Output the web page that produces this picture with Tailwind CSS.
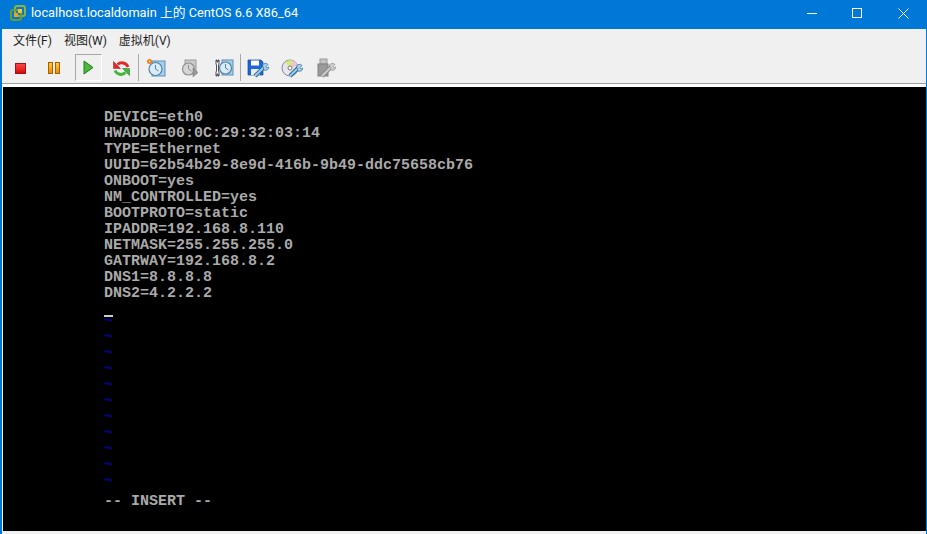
<!DOCTYPE html>
<html lang="zh-CN">
<head>
<meta charset="UTF-8">
<title>localhost.localdomain 上的 CentOS 6.6 X86_64</title>
<script src="https://cdn.jsdelivr.net/npm/@tailwindcss/browser@4"></script>
</head>
<body class="w-[927px] h-[534px] overflow-hidden bg-white font-['Roboto','Noto_Sans_CJK_SC',sans-serif]">
<div class="h-[534px] flex flex-col border-l-2 border-r border-[#0078d7] bg-[#f0f0f0]">
  <!-- title bar -->
  <div class="h-[29px] -ml-[2px] -mr-px pb-[3px] pr-px bg-[#0078d7] flex items-center text-white shrink-0">
    <svg class="ml-[10px] w-[16px] h-[16px]" viewBox="0 0 16 16">
      <rect x="5" y="1" width="10" height="10" rx="2" fill="none" stroke="#8fb339" stroke-width="2"/>
      <rect x="1" y="5" width="10" height="10" rx="2" fill="none" stroke="#6d9a2c" stroke-width="2"/>
      <rect x="8" y="4" width="4" height="4" fill="#f7c325"/>
      <rect x="4" y="8" width="4" height="4" fill="#eaa41a"/>
    </svg>
    <span class="ml-[5px] text-[12.8px] leading-none">localhost.localdomain 上的 CentOS 6.6 X86_64</span>
    <div class="ml-auto flex items-center">
      <div class="w-[46px] pl-[2px] flex justify-center"><div class="w-[10px] h-px bg-white"></div></div>
      <div class="w-[46px] flex justify-center"><div class="w-[10px] h-[10px] border border-white"></div></div>
      <div class="w-[46px] flex justify-center">
        <svg class="w-[11px] h-[11px]" viewBox="0 0 11 11"><path d="M.5.5l10 10M10.500.5l-10 10" stroke="#fff" fill="none"/></svg>
      </div>
    </div>
  </div>
  <!-- menu -->
  <div class="h-[23px] pt-[1px] shrink-0 flex items-center text-[12px] text-[#1a1a1a] pl-[11px] gap-[12px]">
    <span>文件(F)</span><span>视图(W)</span><span>虚拟机(V)</span>
  </div>
  <!-- toolbar -->
  <div class="h-[31px] shrink-0 flex items-center pl-px">
    <div class="w-[34px] h-[27px] pt-px flex items-center justify-center">
      <div class="w-[11px] h-[11px] bg-gradient-to-b from-[#f44] to-[#d80000] border border-[#a01515]"></div>
    </div>
    <div class="w-[34px] h-[27px] pt-px flex items-center justify-center gap-[2px]">
      <div class="w-[5px] h-[12px] bg-gradient-to-b from-[#fc3] to-[#f08a00] border border-[#a86000]"></div>
      <div class="w-[5px] h-[12px] bg-gradient-to-b from-[#fc3] to-[#f08a00] border border-[#a86000]"></div>
    </div>
    <div class="w-[34px] h-[27px] flex justify-center">
      <div class="w-[27px] h-[27px] border border-[#a9a9a9] border-b-white border-r-white flex items-center justify-center">
        <svg class="w-[11px] h-[15px]" viewBox="0 0 11 15"><path d="M1 1l9 6.500-9 6.500z" fill="#4cb83a" stroke="#1d7d1d"/></svg>
      </div>
    </div>
    <div class="w-[34px] h-[27px] pt-px border-r border-[#a9a9a9] flex items-center justify-center">
      <svg class="w-[17px] h-[17px]" viewBox="0 0 17 17">
        <path d="M15 7A6.500 6.500 0 0 0 4.500 4.500" fill="none" stroke="#e02a2a" stroke-width="3"/>
        <path d="M.5 1.500L7.500 8.500H.5z" fill="#e02a2a" stroke="#9a1414" stroke-width=".5"/>
        <path d="M2 10.500A6.500 6.500 0 0 0 12.500 12.500" fill="none" stroke="#43b53a" stroke-width="3"/>
        <path d="M16.500 15.500L9.500 8.500H16.500z" fill="#43b53a" stroke="#1b701b" stroke-width=".5"/>
      </svg>
    </div>
    <div class="w-[34px] h-[27px] pt-px flex items-center justify-center">
      <svg class="w-[20px] h-[20px]" viewBox="0 0 20 20">
        <rect x="6" y="3" width="13" height="15" fill="#a9cfe8" stroke="#5c8fb5"/>
        <circle cx="9.500" cy="11" r="6.500" fill="#dcecf7" stroke="#4f84ad" stroke-width="1.200"/>
        <path d="M9.500 7v4l3 2" fill="none" stroke="#4f84ad"/>
        <circle cx="3.500" cy="3.500" r="2.500" fill="#f2751c"/><circle cx="3.500" cy="3.500" r="1" fill="#ffe06a"/>
      </svg>
    </div>
    <div class="w-[34px] h-[27px] pt-px flex items-center justify-center">
      <svg class="w-[20px] h-[20px]" viewBox="0 0 20 20">
        <rect x="5" y="2" width="11" height="14" fill="#c9c9c9" stroke="#9a9a9a"/>
        <circle cx="8.500" cy="11" r="6" fill="#d6d6d6" stroke="#909090" stroke-width="1.200"/>
        <path d="M8.500 7v4l3 2" fill="none" stroke="#909090"/>
        <path d="M13 10v9l5-4.500z" fill="#999" stroke="#7d7d7d" stroke-width=".6"/>
      </svg>
    </div>
    <div class="w-[34px] h-[27px] pt-px border-r border-[#a9a9a9] flex items-center justify-center">
      <svg class="w-[20px] h-[20px]" viewBox="0 0 20 20">
        <rect x="8" y="2" width="11" height="15" fill="#a9cfe8" stroke="#5c8fb5"/>
        <circle cx="11.500" cy="10" r="6" fill="#dcecf7" stroke="#4f84ad" stroke-width="1.200"/>
        <path d="M11.500 6v4l3 2" fill="none" stroke="#4f84ad"/>
        <path d="M2 2h1v2h1V2h1v4L4.500 7v6l.5 1v4H4v-2H3v2H2v-4l.5-1V7L2 6z" fill="#fff" stroke="#223" stroke-width=".8"/>
      </svg>
    </div>
    <div class="w-[34px] h-[27px] pt-px flex items-center justify-center">
      <svg class="w-[22px] h-[20px]" viewBox="0 0 22 20">
        <path d="M1 2h13l2 2v13H1z" fill="#1f66d9" stroke="#14429a" stroke-width=".7"/>
        <rect x="4" y="2.500" width="8" height="5" fill="#fff"/>
        <rect x="4" y="11" width="9" height="6" fill="#e8eef8"/>
        <path d="M8 18l9-9" stroke="#2f6c96" stroke-width="4"/>
        <path d="M8 18l9-9" stroke="#9ccbe8" stroke-width="2"/>
        <path d="M15.500 7a3.500 3.500 0 0 1 5.500-.5l-2 2 1 1.500 2-1a3.500 3.500 0 0 1-5 3z" fill="#a8d2ec" stroke="#2f6c96" stroke-width=".7"/>
      </svg>
    </div>
    <div class="w-[34px] h-[27px] pt-px flex items-center justify-center">
      <svg class="w-[22px] h-[20px]" viewBox="0 0 22 20">
        <circle cx="9" cy="10" r="8" fill="#e6e6ee" stroke="#8b8b98"/>
        <path d="M9 10L4 4.500A8 8 0 0 1 12 2.600z" fill="#d5e87a"/>
        <path d="M9 10L12 2.600A8 8 0 0 1 16.500 8z" fill="#f3c1d4"/>
        <circle cx="9" cy="10" r="2" fill="#fff" stroke="#777"/>
        <path d="M9 18l8-8" stroke="#2f6c96" stroke-width="4"/>
        <path d="M9 18l8-8" stroke="#9ccbe8" stroke-width="2"/>
        <path d="M15.500 8a3.500 3.500 0 0 1 5.500-.5l-2 2 1 1.500 2-1a3.500 3.500 0 0 1-5 3z" fill="#a8d2ec" stroke="#2f6c96" stroke-width=".7"/>
      </svg>
    </div>
    <div class="w-[34px] h-[27px] pt-px flex items-center justify-center">
      <svg class="w-[20px] h-[20px]" viewBox="0 0 20 20">
        <rect x="4" y="1" width="7" height="5" fill="#c4c4c4" stroke="#9a9a9a"/>
        <rect x="2" y="6" width="10" height="12" fill="#9a9a9a" stroke="#808080"/>
        <path d="M6 18l9-9" stroke="#8a8a8a" stroke-width="4"/>
        <path d="M6 18l9-9" stroke="#cdcdcd" stroke-width="2"/>
        <path d="M13.500 7a3.500 3.500 0 0 1 5.500-.5l-2 2 1 1.500 2-1a3.500 3.500 0 0 1-5 3z" fill="#cdcdcd" stroke="#8a8a8a" stroke-width=".7"/>
      </svg>
    </div>
  </div>
  <div class="h-px shrink-0 bg-[#a0a0a0]"></div>
  <div class="h-[3px] shrink-0 bg-white"></div>
  <!-- console -->
  <div class="flex-1 pb-[3px] flex">
    <div class="w-px bg-white"></div>
    <div class="flex-1 bg-black pl-[101px] pt-[23px] font-['Liberation_Mono',monospace] text-[15px] leading-[16px] font-bold text-[#aaaaaa]">
      <div>DEVICE=eth0</div>
      <div>HWADDR=00:0C:29:32:03:14</div>
      <div>TYPE=Ethernet</div>
      <div>UUID=62b54b29-8e9d-416b-9b49-ddc75658cb76</div>
      <div>ONBOOT=yes</div>
      <div>NM_CONTROLLED=yes</div>
      <div>BOOTPROTO=static</div>
      <div>IPADDR=192.168.8.110</div>
      <div>NETMASK=255.255.255.0</div>
      <div>GATRWAY=192.168.8.2</div>
      <div>DNS1=8.8.8.8</div>
      <div>DNS2=4.2.2.2</div>
      <div class="h-[12px] flex items-end"><div class="w-[9px] h-[2px] -mb-[3px] bg-[#cccccc]"></div></div>
      <div class="text-[#0000a8]">
        <div>~</div>
        <div>~</div>
        <div>~</div>
        <div>~</div>
        <div>~</div>
        <div>~</div>
        <div>~</div>
        <div>~</div>
        <div>~</div>
        <div>~</div>
        <div>~</div>
      </div>
      <div class="mt-[4px]">-- INSERT --</div>
    </div>
  </div>
</div>
</body>
</html>
